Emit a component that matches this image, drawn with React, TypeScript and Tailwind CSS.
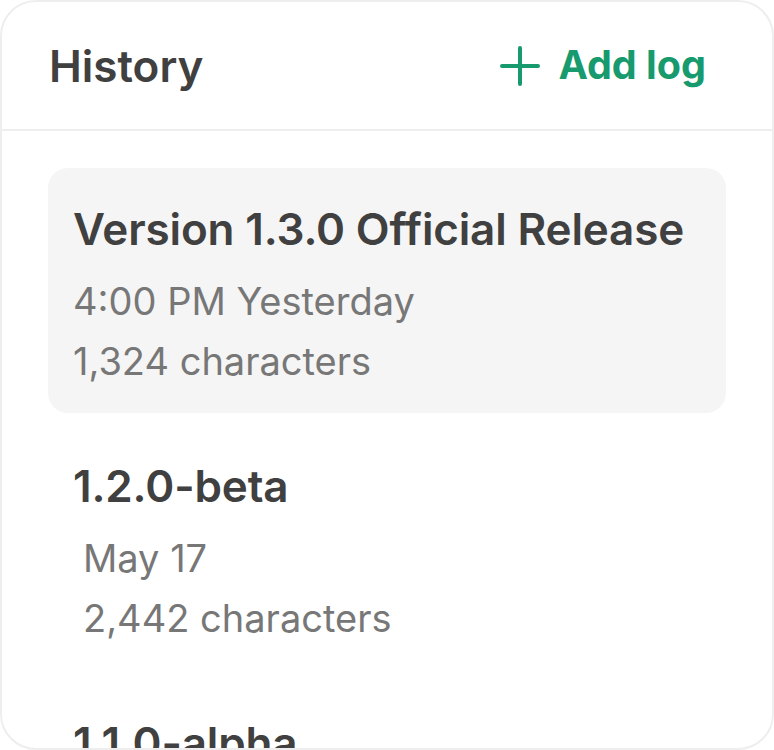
import React from "react";

const items = [
  { title: "Version 1.3.0 Official Release", date: "4:00 PM Yesterday", chars: "1,324 characters", active: true, indent: false },
  { title: "1.2.0-beta", date: "May 17", chars: "2,442 characters", active: false, indent: true },
  { title: "1.1.0-alpha", date: "May 2", chars: "1,120 characters", active: false, indent: true },
];

export default function App() {
  return (
    <div className="w-[774px] h-[750px] bg-white" style={{ fontFamily: "Inter, 'Noto Sans', sans-serif" }}>
      <div className="h-full border-2 border-[#eeeeee] rounded-[36px] overflow-hidden flex flex-col">
        <div className="h-[129px] shrink-0 flex items-center justify-between pl-[47px] pr-[66px] border-b-2 border-[#eeeeee]">
          <div className="text-[44px] font-semibold text-[#404040]">History</div>
          <button className="flex items-center gap-[18px] text-[#179a6d]">
            <svg width="40" height="40" viewBox="0 0 40 40" fill="none" stroke="currentColor" strokeWidth="4" strokeLinecap="round">
              <path d="M20 2v36M2 20h36" />
            </svg>
            <span className="text-[39.5px] font-bold leading-none">Add log</span>
          </button>
        </div>
        <div className="flex flex-col gap-[12px] pt-[37px] px-[46px]">
          {items.map((it) => (
            <div
              key={it.title}
              className={`h-[245px] shrink-0 rounded-[20px] px-[25px] pt-[33px] ${it.active ? "bg-[#f5f5f5]" : ""}`}
            >
              <div className="text-[44px] leading-[56px] font-semibold text-[#404040] tracking-[-0.15px]">{it.title}</div>
              <div className={`mt-[14px] text-[38px] leading-[60px] text-[#777777] ${it.indent ? "pl-[10px]" : ""}`}>
                <div>{it.date}</div>
                <div>{it.chars}</div>
              </div>
            </div>
          ))}
        </div>
      </div>
    </div>
  );
}
